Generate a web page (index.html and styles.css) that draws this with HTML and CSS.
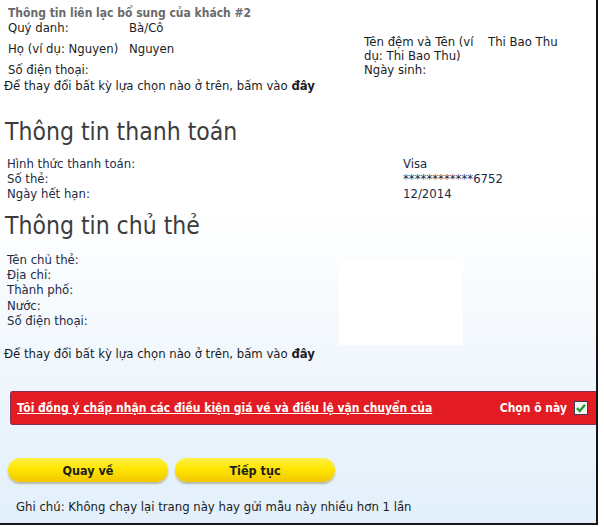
FILE: index.html
```html
<!DOCTYPE html>
<html lang="vi">
<head>
  <meta charset="UTF-8" />
  <title>Thông tin thanh toán</title>
  <link rel="stylesheet" href="styles.css">
</head>
<body>

<div class="page">
  <h3 class="section-title">Thông tin liên lạc bổ sung của khách #2</h3>

  <div class="guest-grid">
    <span class="cell">Quý danh:</span>
    <span class="cell">Bà/Cô</span>
    <span class="cell"></span>
    <span class="cell"></span>

    <span class="cell tall">Họ (ví dụ: Nguyen)</span>
    <span class="cell tall">Nguyen</span>
    <span class="cell tall wrap">Tên đệm và Tên (ví dụ: Thi Bao Thu)</span>
    <span class="cell tall top">Thi Bao Thu</span>

    <span class="cell">Số điện thoại:</span>
    <span class="cell"></span>
    <span class="cell">Ngày sinh:</span>
    <span class="cell"></span>
  </div>

  <p class="change-note">Để thay đổi bất kỳ lựa chọn nào ở trên, bấm vào <b>đây</b></p>

  <h2 class="big-title first">Thông tin thanh toán</h2>
  <div class="pay-grid">
    <span>Hình thức thanh toán:</span><span>Visa</span>
    <span>Số thẻ:</span><span>************6752</span>
    <span>Ngày hết hạn:</span><span>12/2014</span>
  </div>

  <h2 class="big-title">Thông tin chủ thẻ</h2>
  <div class="holder">
    <div class="holder-list">
      <span>Tên chủ thẻ:</span>
      <span>Địa chỉ:</span>
      <span>Thành phố:</span>
      <span>Nước:</span>
      <span>Số điện thoại:</span>
    </div>
    <div class="blank-box"></div>
  </div>

  <p class="change-note">Để thay đổi bất kỳ lựa chọn nào ở trên, bấm vào <b>đây</b></p>

  <div class="terms-bar">
    <a href="#" class="terms-link">Tôi đồng ý chấp nhận các điều kiện giá vé và điều lệ vận chuyển của</a>
    <label class="terms-check">Chọn ô này
      <svg width="14" height="14" viewBox="0 0 14 14">
        <rect x="0.5" y="0.5" width="13" height="13" fill="#f4f4f4" stroke="#3a3a5a"/>
        <path d="M3 7.2 L5.8 10 L11 3.8" fill="none" stroke="#1f9e2e" stroke-width="2.4"/>
      </svg>
    </label>
  </div>

  <div class="actions">
    <button class="btn-yellow">Quay về</button>
    <button class="btn-yellow">Tiếp tục</button>
  </div>

  <p class="footnote">Ghi chú: Không chạy lại trang này hay gửi mẫu này nhiều hơn 1 lần</p>
</div>

</body>
</html>
```

FILE: styles.css
```css
body {
  margin: 0;
  font-family: "DejaVu Sans Condensed", "DejaVu Sans", sans-serif;
  font-size: 13px;
  color: #1b1b24;
  background: #fff;
}

.page {
  width: 596px;
  height: 523px;
  border-right: 2px solid #151515;
  border-bottom: 2px solid #151515;
  background: linear-gradient(#fff 0, #fff 40%, #e2effa 100%);
  overflow: hidden;
}

.section-title {
  margin: 0;
  padding: 6px 0 0 8px;
  font-size: 12px;
  line-height: 14px;
  color: #6a6a6a;
}

.guest-grid {
  display: grid;
  grid-template-columns: 121px 235px 124px auto;
  grid-template-rows: 14px 28px 14px;
  margin: 1px 0 0 8px;
  line-height: 14px;
}
.cell {
  display: flex;
  align-items: center;
}
.cell.wrap {
  padding-right: 6px;
}
.cell.top {
  align-items: flex-start;
}

.change-note {
  margin: 2px 0 0 4px;
  line-height: 14px;
}

.big-title {
  margin: 12px 0 0 5px;
  font-size: 24.5px;
  line-height: 26px;
  font-weight: normal;
  color: #3c3c3c;
}
.big-title.first {
  margin-top: 26px;
}

.pay-grid {
  display: grid;
  grid-template-columns: 396px auto;
  margin: 11px 0 0 7px;
  line-height: 15px;
  color: #1c2a48;
}

.holder {
  display: grid;
  grid-template-columns: 332px 124px;
  margin: 13px 0 0 7px;
  color: #1c2a48;
}
.holder-list {
  display: flex;
  flex-direction: column;
  line-height: 15.2px;
}
.blank-box {
  margin-top: 10px;
  height: 83px;
  background: #fff;
}

.terms-bar {
  display: flex;
  align-items: center;
  justify-content: space-between;
  margin: 30px 0 0 10px;
  height: 32px;
  padding: 0 8px 0 6px;
  background: #e31b23;
  border: 1px solid #85324f;
  border-right: none;
  border-radius: 3px 0 0 3px;
  font-size: 12px;
}
.terms-link {
  color: #fff;
  font-weight: bold;
  text-decoration: underline;
}
.terms-check {
  display: flex;
  align-items: center;
  gap: 7px;
  color: #fff;
  font-weight: bold;
}

.actions {
  display: flex;
  gap: 7px;
  margin: 33px 0 0 8px;
}
.btn-yellow {
  width: 160px;
  height: 24px;
  border: none;
  border-radius: 12px;
  background: linear-gradient(#fff046 0, #ffe600 45%, #f2c600 100%);
  box-shadow: 0 2px 2px rgba(90, 80, 0, 0.35);
  font-family: inherit;
  font-size: 12.5px;
  font-weight: bold;
  color: #1e1e1e;
  cursor: pointer;
}

.footnote {
  margin: 18px 0 0 16px;
  line-height: 14px;
}
```
